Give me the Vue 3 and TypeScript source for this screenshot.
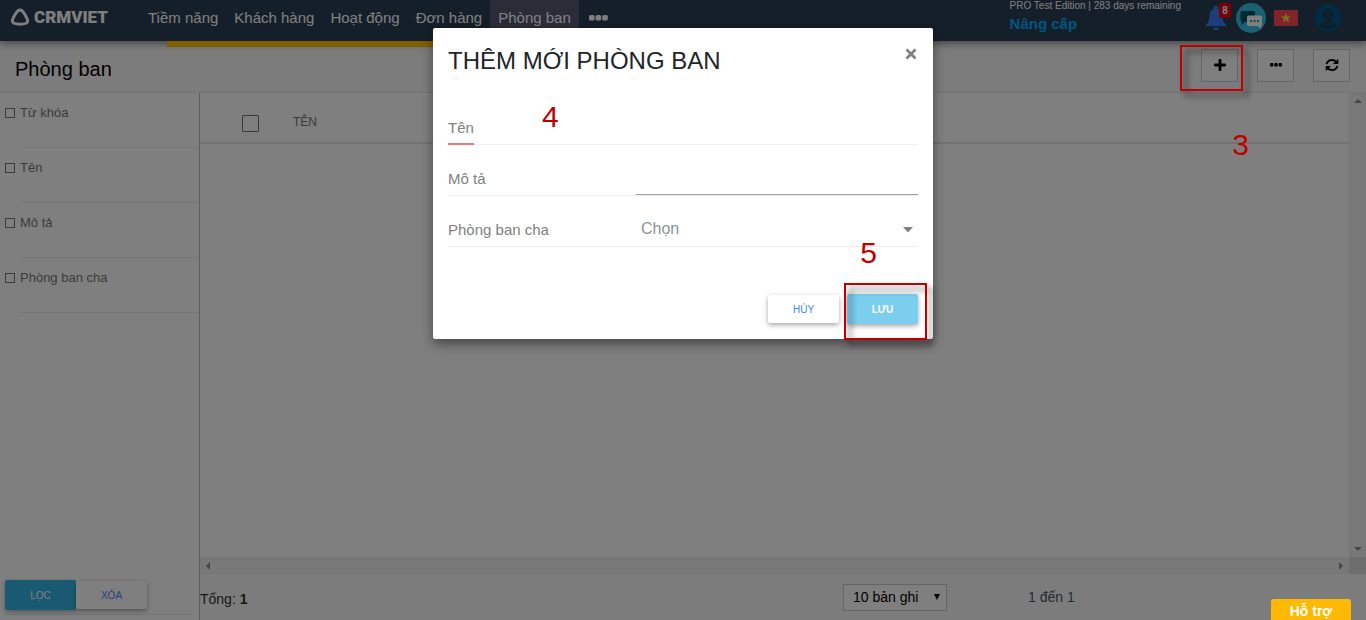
<script setup lang="ts">
import { ref } from 'vue'

interface NavItem {
  label: string
  active?: boolean
}

interface Filter {
  id: string
  label: string
}

const nav: NavItem[] = [
  { label: 'Tiềm năng' },
  { label: 'Khách hàng' },
  { label: 'Hoạt động' },
  { label: 'Đơn hàng' },
  { label: 'Phòng ban', active: true },
]

const filters: Filter[] = [
  { id: 'keyword', label: 'Từ khóa' },
  { id: 'name', label: 'Tên' },
  { id: 'description', label: 'Mô tả' },
  { id: 'parent', label: 'Phòng ban cha' },
]

const checked = ref<string[]>([])
const name = ref('')
const description = ref('')
const parent = ref('')
const pageSize = ref('10')
</script>

<template>
  <div class="app">
    <header class="topbar">
      <a class="brand" href="#">
        <svg width="20" height="20" viewBox="0 0 20 20" fill="none" stroke="#fff" stroke-width="3" stroke-linejoin="round">
          <path d="M10 3C7 3 2 11.600 2.500 14.600C3 18 17 18 17.500 14.600C18 11.600 13 3 10 3Z" />
        </svg>
        <span>CRMVIET</span>
      </a>
      <nav class="nav">
        <a v-for="item in nav" :key="item.label" href="#" :class="{ active: item.active }">{{ item.label }}</a>
        <button class="more" type="button" aria-label="Thêm">
          <svg width="19" height="6" viewBox="0 0 19 6" fill="#fff">
            <rect width="5.600" height="5.400" rx="1.500" />
            <rect x="6.600" width="5.600" height="5.400" rx="1.500" />
            <rect x="13.200" width="5.600" height="5.400" rx="1.500" />
          </svg>
        </button>
      </nav>
      <div class="plan">
        <span>PRO Test Edition | 283 days remaining</span>
        <a href="#">Nâng cấp</a>
      </div>
      <div class="tools">
        <button class="bell" type="button" aria-label="Thông báo">
          <svg width="22" height="26" viewBox="0 0 22 26" fill="#387ef8">
            <circle cx="11" cy="3" r="2.2" />
            <path d="M11 3.500C6.600 3.500 4.600 7 4.500 11C4.400 15.500 3.400 17.600 1.300 19.500C.6 20.300 1 21.200 2 21.200H20C21 21.200 21.400 20.300 20.700 19.500C18.600 17.600 17.600 15.500 17.500 11C17.400 7 15.400 3.500 11 3.500Z" />
            <path d="M8 22.700H14C13.600 25.800 8.400 25.800 8 22.700Z" />
          </svg>
          <span class="badge">8</span>
        </button>
        <button class="chat" type="button" aria-label="Trò chuyện">
          <svg width="30" height="30" viewBox="0 0 30 30">
            <circle cx="15" cy="15" r="15" fill="#36c0e4" />
            <path d="M6.500 8H17.500Q19 8 19 9.500V17.500Q19 19 17.500 19H9L5.500 22V19Q4.500 18.500 4.500 17.500V9.500Q4.500 8 6.500 8Z" fill="#005058" />
            <path d="M12.500 12.500H24.500Q26 12.500 26 14V21.500Q26 23 25 23V26L22 23H12.500Q11 23 11 21.500V14Q11 12.500 12.500 12.500Z" fill="#fff" />
            <g fill="#2597b4"><rect x="14" y="17" width="2" height="2" /><rect x="17.500" y="17" width="2" height="2" /><rect x="21" y="17" width="2" height="2" /></g>
          </svg>
        </button>
        <button class="flag" type="button" aria-label="Tiếng Việt">
          <svg width="24" height="16" viewBox="0 0 24 16">
            <rect width="24" height="16" fill="#ff4b55" />
            <path d="M12 3L13.200 6.600H17L14 8.800L15.100 12.500L12 10.200L8.900 12.500L10 8.800L7 6.600H10.800Z" fill="#ffe044" />
          </svg>
        </button>
        <button class="avatar" type="button" aria-label="Tài khoản">
          <svg width="28" height="28" viewBox="0 0 28 28">
            <circle cx="14" cy="14" r="13.400" fill="#00598a" />
            <circle cx="14" cy="10.500" r="5" fill="#25405a" stroke="#13344f" />
            <path d="M6 22.500C6.500 18.500 10 17.300 14 17.300S21.500 18.500 22 22.500Q14 26.500 6 22.500Z" fill="#25405a" stroke="#13344f" />
          </svg>
        </button>
      </div>
    </header>

    <section class="toolbar">
      <div class="progress"></div>
      <h1>Phòng ban</h1>
      <div class="actions">
        <button type="button" aria-label="Thêm mới">
          <svg width="12" height="12" viewBox="0 0 12 12"><path d="M6 1.200V10.800M1.200 6H10.800" stroke="#000" stroke-width="2.800" stroke-linecap="round" /></svg>
        </button>
        <button type="button" aria-label="Tùy chọn">
          <svg width="12" height="4" viewBox="0 0 12 4"><rect width="3.400" height="3.400" rx="1" /><rect x="4.300" width="3.400" height="3.400" rx="1" /><rect x="8.600" width="3.400" height="3.400" rx="1" /></svg>
        </button>
        <button type="button" aria-label="Tải lại">
          <svg width="14" height="14" viewBox="0 0 14 14" fill="none" stroke="#000" stroke-width="2">
            <path d="M1.500 6C2.400 3 4.500 1.900 7 1.900C8.800 1.900 10.200 2.600 11.400 3.900M12.500 8C11.600 11 9.500 12.100 7 12.100C5.200 12.100 3.800 11.400 2.600 10.100" />
            <path d="M13.300 .8V6H8.100ZM.7 13.200V8H5.900Z" fill="#000" stroke="none" />
          </svg>
        </button>
      </div>
    </section>

    <div class="body">
      <aside class="sidebar">
        <div v-for="f in filters" :key="f.id" class="filter">
          <label><input v-model="checked" type="checkbox" :value="f.id" />{{ f.label }}</label>
        </div>
        <div class="filter-actions">
          <button class="btn primary" type="button">LỌC</button>
          <button class="btn flat" type="button">XÓA</button>
        </div>
      </aside>

      <main class="main">
        <div class="grid-area">
          <div class="table-wrap">
            <table>
              <thead>
                <tr>
                  <th class="check"><input type="checkbox" aria-label="Chọn tất cả" /></th>
                  <th>TÊN</th>
                </tr>
              </thead>
            </table>
          </div>
          <div class="vscroll">
            <svg width="8" height="4" viewBox="0 0 8 4"><path d="M0 4L4 0L8 4Z" /></svg>
            <svg width="8" height="4" viewBox="0 0 8 4"><path d="M0 0L4 4L8 0Z" /></svg>
          </div>
          <div class="hscroll">
            <svg width="4" height="8" viewBox="0 0 4 8"><path d="M4 0L0 4L4 8Z" /></svg>
            <svg width="4" height="8" viewBox="0 0 4 8"><path d="M0 0L4 4L0 8Z" /></svg>
          </div>
          <div class="corner"></div>
        </div>
        <footer class="pager">
          <span>Tổng: <b>1</b></span>
          <div class="size">
            <select v-model="pageSize" aria-label="Số bản ghi">
              <option value="10">10 bản ghi</option>
            </select>
            <svg width="6" height="6" viewBox="0 0 6 6"><path d="M0 0H6L3 6Z" /></svg>
          </div>
          <span class="range">1 đến 1</span>
        </footer>
      </main>
    </div>

    <div class="backdrop">
      <form class="modal" role="dialog" aria-labelledby="modal-title" @submit.prevent>
        <div class="modal-head">
          <h2 id="modal-title">THÊM MỚI PHÒNG BAN</h2>
          <button class="close" type="button" aria-label="Đóng">
            <svg width="12" height="12" viewBox="0 0 12 12"><path d="M1.500 1.500L10.500 10.500M10.500 1.500L1.500 10.500" stroke="#808080" stroke-width="2.800" /></svg>
          </button>
        </div>
        <div class="row">
          <label class="required" for="dept-name">Tên</label>
          <input id="dept-name" v-model="name" type="text" />
        </div>
        <div class="row">
          <label for="dept-desc">Mô tả</label>
          <input id="dept-desc" v-model="description" class="lined" type="text" />
        </div>
        <div class="row">
          <label for="dept-parent">Phòng ban cha</label>
          <div class="picker">
            <select id="dept-parent" v-model="parent">
              <option value="">Chọn</option>
            </select>
            <svg width="10" height="6" viewBox="0 0 10 6"><path d="M0 0H10L5 5.500Z" fill="#808080" /></svg>
          </div>
        </div>
        <div class="modal-foot">
          <button class="btn flat" type="button">HỦY</button>
          <button class="btn save" type="submit">LƯU</button>
        </div>
        <span class="step four">4</span>
        <span class="step five">5</span>
        <span class="mark mark-save"></span>
      </form>
    </div>

    <span class="mark mark-add"></span>
    <span class="step three">3</span>
    <button class="support" type="button">Hỗ trợ</button>
  </div>
</template>

<style>
body {
  margin: 0;
}
</style>

<style scoped>
.app {
  position: relative;
  display: flex;
  flex-direction: column;
  min-height: 100vh;
  background: #fff;
  color: #333;
  font-family: "Liberation Sans", Arial, sans-serif;
  font-size: 14px;
}
.app * {
  box-sizing: border-box;
}
button,
input,
select {
  font: inherit;
  margin: 0;
}
button {
  display: flex;
  align-items: center;
  justify-content: center;
  padding: 0;
  border: 0;
  background: none;
}
a {
  color: inherit;
  text-decoration: none;
}

.topbar {
  position: relative;
  z-index: 1;
  display: flex;
  height: 41px;
  background: #2a3e52;
  color: #fff;
  box-shadow: 0 2px 8px rgba(0, 0, 0, 0.5);
}
.brand {
  display: flex;
  gap: 4px;
  width: 140px;
  height: 34px;
  padding-left: 10px;
  align-items: center;
  font: 900 17px Roboto, sans-serif;
}
.nav {
  display: flex;
  font-size: 15px;
  line-height: 36px;
}
.nav a {
  padding: 0 8px;
}
.nav .active {
  background: #545871;
}
.more {
  height: 36px;
  padding: 0 10px;
}
.plan {
  display: flex;
  flex-direction: column;
  margin-left: auto;
  font-size: 10px;
  line-height: 12px;
}
.plan a {
  color: #00aaff;
  font-size: 15px;
  font-weight: bold;
  line-height: 24px;
}
.tools {
  display: flex;
  align-items: center;
  height: 36px;
  padding: 0 24px;
}
.bell {
  position: relative;
  margin-right: 9px;
}
.badge {
  position: absolute;
  top: -2px;
  left: 14px;
  width: 12px;
  border-radius: 2px;
  background: #f00010;
  color: #fff;
  font-size: 10px;
  font-weight: bold;
  line-height: 15px;
}
.flag {
  margin: 0 16px 0 8px;
}

.toolbar {
  position: relative;
  display: flex;
  align-items: center;
  justify-content: space-between;
  height: 52px;
  padding: 0 16px 0 15px;
  border-bottom: 1px solid #e8e8e8;
  background: #f8f8f8;
}
.progress {
  position: absolute;
  z-index: 2;
  top: 0;
  left: 167px;
  width: 40%;
  height: 6px;
  background: #ffc000;
}
h1 {
  margin: 0;
  padding-top: 5px;
  color: #000;
  font-size: 20px;
  font-weight: normal;
}
.actions {
  display: flex;
  gap: 19px;
  padding-bottom: 2px;
}
.actions button {
  width: 37px;
  height: 33px;
  border: 1px solid #ccc;
  background: #fff;
  padding-bottom: 2px;
}

.body {
  display: flex;
  flex: 1;
}
.sidebar {
  display: flex;
  flex-direction: column;
  width: 200px;
  border-right: 1px solid #bbb;
  color: #777;
  font-size: 13px;
}
.filter {
  height: 55px;
  padding: 12px 0 0 5px;
  background: linear-gradient(#ebebeb, #ebebeb) 20px 100% / 100% 1px no-repeat;
}
.filter label {
  display: flex;
  align-items: center;
  gap: 5px;
  line-height: 16px;
}
.filter input,
.check input {
  appearance: none;
  width: 10px;
  height: 10px;
  border: 1px solid #777;
}
.filter-actions {
  display: flex;
  align-items: center;
  margin: auto 5px 5px;
  padding-bottom: 4px;
  border-bottom: 1px solid #ebebeb;
}
.btn {
  width: 71px;
  height: 30px;
  border-radius: 2px;
  font-size: 10px;
  box-shadow: 0 2px 5px rgba(0, 0, 0, 0.35);
}
.primary {
  background: #33b5e5;
  color: #fff;
}
.flat {
  height: 28px;
  background: #fff;
  color: #4285f4;
}

.main {
  display: flex;
  flex: 1;
  flex-direction: column;
}
.grid-area {
  display: grid;
  flex: 1;
  grid-template: 1fr 17px / 1fr 17px;
}
table {
  width: 100%;
  border-collapse: collapse;
}
th {
  height: 50px;
  padding: 8px 0 0;
  border-bottom: 2px solid #e4e4e4;
  color: #777;
  font-size: 12px;
  font-weight: normal;
  text-align: left;
}
th.check {
  width: 93px;
  padding: 12px 0 0 42px;
}
.check input {
  display: block;
  width: 17px;
  height: 17px;
  border-radius: 1px;
}
.vscroll,
.hscroll {
  display: flex;
  align-items: center;
  justify-content: space-between;
  padding: 6px 0;
  background: #f1f1f1;
  fill: #8c8c8c;
}
.vscroll {
  flex-direction: column;
}
.hscroll {
  padding: 0 6px;
}
.corner {
  background: #dcdcdc;
}
.pager {
  display: grid;
  grid-template-columns: 643fr 185fr 338fr;
  align-items: center;
  height: 46px;
  background: #f8f8f8;
  line-height: 20px;
}
.pager > span:first-child {
  padding-top: 4px;
}
.size {
  position: relative;
  width: 104px;
}
.size select {
  appearance: none;
  display: block;
  width: 100%;
  height: 27px;
  padding: 0 9px;
  border: 1px solid #ccc;
  border-radius: 0;
  background: #fff;
  color: #000;
}
.size svg {
  position: absolute;
  top: 10px;
  right: 7px;
}
.range {
  color: #445868;
}

.backdrop {
  position: absolute;
  z-index: 3;
  inset: 0;
  background: rgba(0, 0, 0, 0.5);
}
.modal {
  position: relative;
  width: 500px;
  margin: 28px auto 0;
  padding: 0 15px 15px;
  border-radius: 2px;
  background: #fff;
  box-shadow: 0 5px 12px rgba(0, 0, 0, 0.45);
  color: #808080;
  font-size: 15px;
}
.modal-head {
  display: flex;
  justify-content: space-between;
  height: 66px;
}
h2 {
  margin: 0;
  color: #212529;
  font-size: 24px;
  font-weight: normal;
  line-height: 66px;
}
.close {
  width: 14px;
  height: 52px;
}
.row {
  display: grid;
  grid-template-columns: 2fr 3fr;
  align-items: end;
  height: 51px;
  border-bottom: 1px solid #eee;
}
.row label {
  position: relative;
  justify-self: start;
  padding-bottom: 6px;
  line-height: 20px;
}
.row .required::after {
  position: absolute;
  right: 0;
  bottom: -1px;
  left: 0;
  height: 2px;
  background: #f07878;
  content: "";
}
.row input {
  width: 100%;
  height: 34px;
  padding: 0 5px;
  border: 0;
  background: none;
  outline: 0;
}
.row .lined {
  border-bottom: 1px solid #a0a0a0;
}
.picker {
  position: relative;
}
.picker select {
  appearance: none;
  display: block;
  width: 100%;
  height: 36px;
  padding: 0 5px;
  border: 0;
  background: none;
  color: #8a939b;
  font-size: 16px;
}
.picker svg {
  position: absolute;
  top: 17px;
  right: 5px;
}
.modal-foot {
  display: flex;
  align-items: center;
  justify-content: flex-end;
  gap: 8px;
  padding-top: 47px;
}
.save {
  background: #7bceee;
  color: #fff;
  font-weight: bold;
}

.step {
  position: absolute;
  z-index: 4;
  color: #c00000;
  font-size: 30px;
  line-height: 34px;
}
.mark {
  position: absolute;
  z-index: 4;
  border: 2px solid #c00000;
  filter: drop-shadow(5px 5px 3px rgba(0, 0, 0, 0.6));
  pointer-events: none;
}
.four {
  top: 72px;
  left: 109px;
}
.five {
  top: 208px;
  right: 56px;
}
.mark-save {
  right: 6px;
  bottom: -1px;
  width: 83px;
  height: 57px;
}
.mark-add {
  top: 45px;
  right: 123px;
  width: 63px;
  height: 46px;
}
.three {
  top: 128px;
  right: 117px;
}
.support {
  position: absolute;
  z-index: 4;
  right: 15px;
  bottom: 0;
  width: 80px;
  height: 21px;
  padding-top: 3px;
  border-radius: 3px 3px 0 0;
  background: #ffb900;
  color: #fff;
  font-size: 14px;
  font-weight: bold;
}
</style>
